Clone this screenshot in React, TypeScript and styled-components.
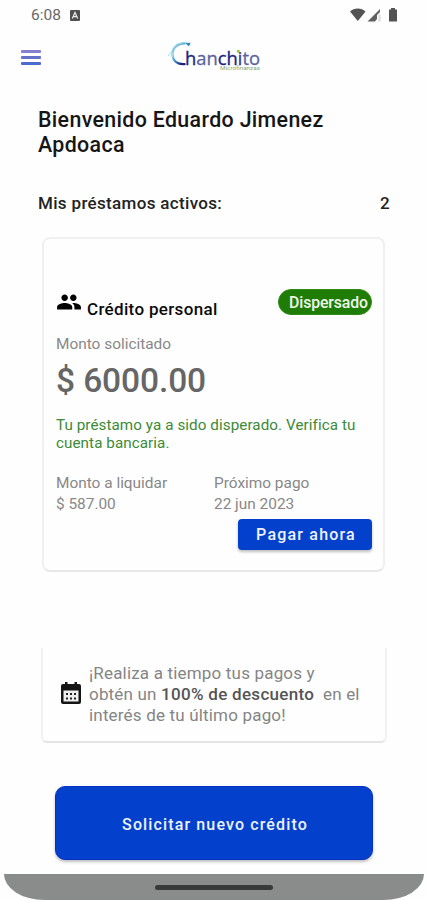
import React from 'react';
import styled, { createGlobalStyle } from 'styled-components';

const GlobalStyle = createGlobalStyle`
  * { box-sizing: border-box; }
  body { margin: 0; background: #fefefe; font-family: Roboto, "Liberation Sans", sans-serif; }
  h1, h2, p { margin: 0; }
  svg { display: block; flex: none; }
`;

const Screen = styled.div`
  width: 427px;
  height: 900px;
  overflow: hidden;
  display: flex;
  flex-direction: column;
  background: #fefefe;
`;

const StatusBar = styled.div`
  height: 30px;
  flex: none;
  display: flex;
  align-items: center;
  padding: 0 29px 0 31px;
  color: #686868;
`;

const Clock = styled.span`
  font-size: 15.5px;
  line-height: 30px;
  width: 39px;
  white-space: nowrap;
`;

const StatusIcons = styled.div`
  margin-left: auto;
`;

const AppBar = styled.header`
  height: 54px;
  flex: none;
  display: flex;
  align-items: center;
  padding-left: 21px;
`;

const MenuButton = styled.button`
  display: flex;
  flex-direction: column;
  gap: 3px;
  width: 20px;
  padding: 0;
  border: 0;
  background: none;
`;

const MenuLine = styled.span<{ $color: string }>`
  height: 3px;
  border-radius: 1px;
  background: ${({ $color }) => $color};
`;

const Logo = styled.svg`
  margin-left: 126px;
`;

const Content = styled.main`
  flex: none;
  height: 790px;
  padding: 23px 37px 0 38px;
`;

const Title = styled.h1`
  height: 51px;
  font-size: 21.4px;
  line-height: 25px;
  font-weight: 500;
  letter-spacing: 0.33px;
  color: #161616;
`;

const SummaryRow = styled.div`
  display: flex;
  justify-content: space-between;
  margin-top: 34px;
  height: 22px;
  font-size: 17px;
  line-height: 22px;
  font-weight: 500;
  letter-spacing: 0.33px;
  color: #222;
`;

const LoanCard = styled.section`
  width: 343px;
  height: 335px;
  margin: 23px 0 0 4px;
  padding: 50px 11px 0 12px;
  border: 2px solid #f0f0f0;
  border-bottom-color: #e8e8e8;
  border-radius: 8px;
`;

const LoanHeader = styled.div`
  display: flex;
  height: 36px;
`;

const LoanName = styled.h2`
  margin: 10px 0 0 5px;
  font-size: 17px;
  line-height: 20px;
  font-weight: 500;
  letter-spacing: 0.33px;
  color: #0c0c0c;
`;

const StatusPill = styled.span`
  margin-left: auto;
  height: 26px;
  width: 94px;
  padding-left: 10px;
  border-radius: 13px;
  background: #1f7d07;
  border: 1px solid #2d8a15;
  color: #eef8ea;
  font-size: 15.8px;
  line-height: 25px;
  font-weight: 500;
  letter-spacing: -0.1px;
  white-space: nowrap;
`;

const Muted = styled.p<{ $top?: number }>`
  margin-top: ${({ $top = 0 }) => $top}px;
  font-size: 15.4px;
  line-height: 21px;
  color: #888;
  white-space: nowrap;
`;

const Amount = styled.p`
  margin-top: 6px;
  font-size: 33.5px;
  line-height: 40px;
  font-weight: 500;
  letter-spacing: -0.1px;
  color: #666;
`;

const Message = styled.p`
  margin-top: 15px;
  height: 36px;
  font-size: 15.2px;
  line-height: 18px;
  letter-spacing: 0.08px;
  color: #3c8a36;
  white-space: nowrap;
`;

const Details = styled.div`
  display: grid;
  grid-template-columns: 158px 1fr;
  margin-top: 21px;
`;

const PayButton = styled.button`
  display: block;
  width: 134px;
  height: 31px;
  margin: 4px 0 0 auto;
  padding: 0 0 0 2px;
  border: 0;
  border-radius: 4px;
  background: #0341cc;
  box-shadow: 0 2px 3px rgba(0, 0, 0, 0.25);
  color: #eef2ff;
  font: 500 16px/32px Roboto, sans-serif;
  letter-spacing: 1.2px;
`;

const PromoCard = styled.section`
  display: flex;
  align-items: center;
  width: 346px;
  height: 95px;
  margin: 76px 0 0 3px;
  padding: 0 0 0 18px;
  border: solid #f1f1f1;
  border-width: 0 2px 2px;
  border-bottom-color: #e4e4e4;
  border-radius: 0 0 6px 6px;
`;

const CalendarIcon = styled.svg`
  margin-bottom: 3px;
`;

const PromoText = styled.p`
  margin-left: 8px;
  font-size: 17px;
  line-height: 20.7px;
  letter-spacing: 0.18px;
  color: #858585;
  white-space: pre;

  b {
    font-weight: 500;
    letter-spacing: 0.3px;
    color: #555;
  }
`;

const RequestButton = styled.button`
  display: block;
  width: 318px;
  height: 74px;
  margin: 43px 0 0 17px;
  padding: 3px 0 0 2px;
  border: 1px solid #0930c4;
  border-radius: 10px;
  background: #0341cc;
  box-shadow: 0 2px 3px rgba(0, 0, 0, 0.25);
  color: #eef2ff;
  font: 500 16px/70px Roboto, sans-serif;
  letter-spacing: 1.13px;
`;

const NavBar = styled.footer`
  flex: none;
  width: 420px;
  height: 26px;
  margin-left: 4px;
  padding: 11px 0 0 151px;
  border-radius: 0 0 42px 42px / 0 0 27px 27px;
  background: #8a8c8b;
`;

const NavHandle = styled.div`
  width: 118px;
  height: 5px;
  border-radius: 3px;
  background: #383a3a;
`;

function ChanchitoLogo() {
  return (
    <Logo width="98" height="32" viewBox="0 0 98 32">
      <defs>
        <linearGradient id="arc" x1="0" y1="0" x2="1" y2="1">
          <stop offset="0" stopColor="#a6def4" />
          <stop offset="0.5" stopColor="#4a9dcc" />
          <stop offset="0.8" stopColor="#16267f" />
        </linearGradient>
        <linearGradient id="letters" x1="0" y1="0" x2="1" y2="0">
          <stop offset="0.14" stopColor="#1b2382" />
          <stop offset="0.16" stopColor="#5a629f" />
          <stop offset="0.42" stopColor="#5a629f" />
          <stop offset="0.45" stopColor="#1b2382" />
          <stop offset="0.73" stopColor="#1b2382" />
          <stop offset="0.75" stopColor="#5a629f" />
        </linearGradient>
      </defs>
      <path d="M18 2.500C11 2 5 7 5.500 14c.5 6 5 10 13 9" fill="none" stroke="url(#arc)" strokeWidth="2.200" />
      <path d="M1 15 5 10l1 7M11 3l9-2" fill="none" stroke="#a5dcf2" strokeWidth="1" />
      <path d="M18 2l5.500-.3-1.500 3.800z" fill="#2d88be" />
      <text
        x="18"
        y="23.700"
        fontFamily="Open Sans, sans-serif"
        fontSize="17.800"
        textLength="75"
        lengthAdjust="spacingAndGlyphs"
        fill="url(#letters)"
        stroke="url(#letters)"
        strokeWidth="0.300"
      >
        hanchito
      </text>
      <circle cx="71.300" cy="10.300" r="1.500" fill="#9dbf31" />
      <text x="53" y="29" fontFamily="Roboto, sans-serif" fontSize="5.500" textLength="40" lengthAdjust="spacingAndGlyphs" fill="#86a978">
        Microfinanzas
      </text>
    </Logo>
  );
}

export default function App() {
  return (
    <Screen>
      <GlobalStyle />
      <StatusBar>
        <Clock>6:08</Clock>
        <svg width="10" height="11" viewBox="0 0 10 11">
          <rect width="10" height="11" rx="1" fill="#505050" />
          <path d="M2.300 8.500 5 2.500l2.700 6M3.300 6.700h3.400" fill="none" stroke="#eee" strokeWidth="1.200" />
        </svg>
        <StatusIcons>
          <svg width="48" height="14" viewBox="0 0 48 14">
            <path d="M0 3.500C4-.5 11.500-.5 15.500 3.500L7.800 13z" fill="#535353" />
            <path d="M17.500 13.500 30 1v3l-3 3v4l-2 2.500z" fill="#606060" />
            <path d="M28.500 6.500h2v7h-2z" fill="#dadada" />
            <path d="M41 0h4v1.500h2V13.500h-8V1.500h2z" fill="#535353" />
          </svg>
        </StatusIcons>
      </StatusBar>
      <AppBar>
        <MenuButton aria-label="Menú">
          <MenuLine $color="#8480cf" />
          <MenuLine $color="#6572ca" />
          <MenuLine $color="#4c6bd0" />
        </MenuButton>
        <ChanchitoLogo />
      </AppBar>
      <Content>
        <Title>Bienvenido Eduardo Jimenez Apdoaca</Title>
        <SummaryRow>
          <span>Mis préstamos activos:</span>
          <span>2</span>
        </SummaryRow>
        <LoanCard>
          <LoanHeader>
            <svg width="26" height="26" viewBox="0 0 24 24">
              <path d="M16 11c1.660 0 2.990-1.340 2.990-3S17.660 5 16 5s-3 1.340-3 3 1.340 3 3 3zm-8 0c1.660 0 2.990-1.340 2.990-3S9.660 5 8 5 5 6.340 5 8s1.340 3 3 3zm0 2c-2.330 0-7 1.170-7 3.500V19h14v-2.500C15 14.170 10.330 13 8 13zm8 0c-.290 0-.620.020-.970.050C16.190 13.890 17 15.020 17 16.500V19h6v-2.500c0-2.330-4.670-3.500-7-3.500z" />
            </svg>
            <LoanName>Crédito personal</LoanName>
            <StatusPill>Dispersado</StatusPill>
          </LoanHeader>
          <Muted $top={9}>Monto solicitado</Muted>
          <Amount>$ 6000.00</Amount>
          <Message>
            Tu préstamo ya a sido disperado. Verifica tu
            <br />
            cuenta bancaria.
          </Message>
          <Details>
            <Muted>Monto a liquidar</Muted>
            <Muted>Próximo pago</Muted>
            <Muted>$ 587.00</Muted>
            <Muted>22 jun 2023</Muted>
          </Details>
          <PayButton>Pagar ahora</PayButton>
        </LoanCard>
        <PromoCard>
          <CalendarIcon width="20" height="22" viewBox="0 0 20 22">
            <path d="M2 2h2V0h2.500v2h7V0H16v2h2q2 0 2 2v16q0 2-2 2H2q-2 0-2-2V4q0-2 2-2z" fill="#151515" />
            <path d="M2.500 8.500h15v11h-15z" fill="#eee" />
            <path d="M5 11h2v2H5zM9 11h2v2H9zM13 11h2v2h-2zM5 15.500h2v2H5zM9 15.500h2v2H9zM13 15.500h2v2h-2z" fill="#222" />
          </CalendarIcon>
          <PromoText>
            ¡Realiza a tiempo tus pagos y{'\n'}obtén un <b>100% de descuento</b>{'  en el\n'}interés de tu último pago!
          </PromoText>
        </PromoCard>
        <RequestButton>Solicitar nuevo crédito</RequestButton>
      </Content>
      <NavBar>
        <NavHandle />
      </NavBar>
    </Screen>
  );
}
